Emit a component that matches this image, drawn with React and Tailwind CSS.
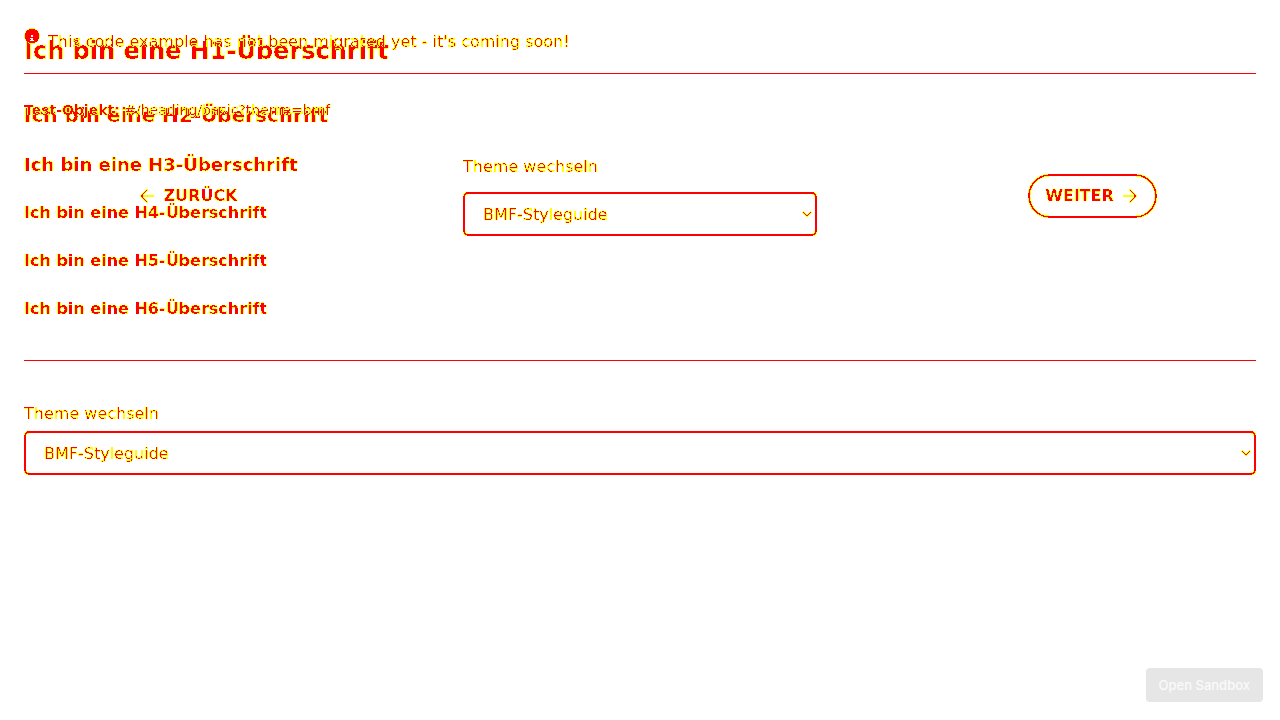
import { ArrowLeft, ArrowRight } from 'lucide-react';

const headings = [
  { Tag: 'h1', style: 'text-2xl leading-7' },
  { Tag: 'h2', style: 'text-xl leading-7 mt-9' },
  { Tag: 'h3', style: 'text-lg leading-6 mt-6' },
  { Tag: 'h4', style: 'text-base mt-6' },
  { Tag: 'h5', style: 'text-base mt-6' },
  { Tag: 'h6', style: 'text-base mt-6' },
];

// Solid pixels become red, antialiased edge pixels become yellow.
function DiffFilter() {
  return (
    <svg width="0" height="0" className="absolute" aria-hidden="true">
      <filter id="diff" x="0" y="0" width="1" height="1" colorInterpolationFilters="sRGB">
        <feColorMatrix values="0 0 0 0 1  0 0 0 1 0  0 0 0 0 0  0 0 0 1 0" />
        <feComponentTransfer>
          <feFuncG type="discrete" tableValues="1 1 1 1 1 1 1 1 0 0" />
          <feFuncA type="discrete" tableValues="0 1 1 1 1 1 1 1 1 1 1 1 1 1 1 1 1 1 1 1" />
        </feComponentTransfer>
      </filter>
    </svg>
  );
}

function ThemeSelect({ id, gap }) {
  return (
    <div className={`flex flex-col ${gap}`}>
      <label htmlFor={id}>Theme wechseln</label>
      <div className="relative">
        <select
          id={id}
          className="block h-11 w-full appearance-none rounded-[5px] border-2 border-black bg-transparent pt-[2px] pr-8 pl-[18px]"
        >
          <option>BMF-Styleguide</option>
        </select>
        <svg
          viewBox="0 0 10 6"
          className="pointer-events-none absolute top-[19px] right-[5px] h-[6px] w-[10px]"
          fill="none"
          stroke="currentColor"
          strokeWidth="1.4"
          aria-hidden="true"
        >
          <path d="M1 1 L5 4.7 L9 1" />
        </svg>
      </div>
    </div>
  );
}

function HeadingPage() {
  return (
    <div className="col-start-1 row-start-1 px-6 pt-[37px] pb-6 [filter:url(#diff)]">
      {headings.map(({ Tag, style }) => (
        <Tag key={Tag} className={`font-bold ${style}`}>
          Ich bin eine {Tag.toUpperCase()}-Überschrift
        </Tag>
      ))}
      <hr className="mt-[39px] mb-[41px] border-black" />
      <ThemeSelect id="theme-heading" gap="gap-[5px]" />
    </div>
  );
}

function MigrationPage() {
  return (
    <div className="pointer-events-none col-start-1 row-start-1 px-6 pt-7 pb-6 [filter:url(#diff)]">
      <div className="flex items-start gap-2">
        <svg viewBox="0 0 16 16" className="h-4 w-4" aria-hidden="true">
          <path
            fillRule="evenodd"
            d="M8 0.5a7.5 7.5 0 1 0 0 15a7.5 7.5 0 0 0 0-15zM7 7h2v2H7zM6 10h3v2h1v1H6v-1h1v-1H6z"
          />
        </svg>
        <p className="pt-[2px]">This code example has not been migrated yet - it's coming soon!</p>
      </div>
      <hr className="mt-[19px] border-black" />
      <p className="mt-6 text-sm leading-6">
        <strong>Test-Objekt:</strong> #/heading/basic?theme=bmf
      </p>
      <div className="mt-[33px] grid grid-cols-[1fr_354px_1fr] items-center gap-28">
        <button className="pointer-events-auto flex h-11 items-center gap-1.5 justify-self-center px-4 font-bold">
          <ArrowLeft className="size-5" strokeWidth={1.75} />
          ZURÜCK
        </button>
        <ThemeSelect id="theme-page" gap="gap-[13px]" />
        <button className="pointer-events-auto flex h-11 items-center gap-1.5 justify-self-center rounded-full border-2 border-black px-[15px] font-bold">
          WEITER
          <ArrowRight className="size-5" strokeWidth={1.75} />
        </button>
      </div>
    </div>
  );
}

export default function App() {
  return (
    <div className="min-h-screen bg-white font-['DejaVu_Sans',sans-serif] text-base text-black">
      <DiffFilter />
      <main className="grid grid-cols-1">
        <HeadingPage />
        <MigrationPage />
      </main>
      <button className="fixed right-[17px] bottom-[18px] h-[34px] rounded bg-[#e6e6e6] px-[13px] pt-[2px] font-['Inter',sans-serif] text-[13px] font-medium text-[#fafafa]">
        Open Sandbox
      </button>
    </div>
  );
}
